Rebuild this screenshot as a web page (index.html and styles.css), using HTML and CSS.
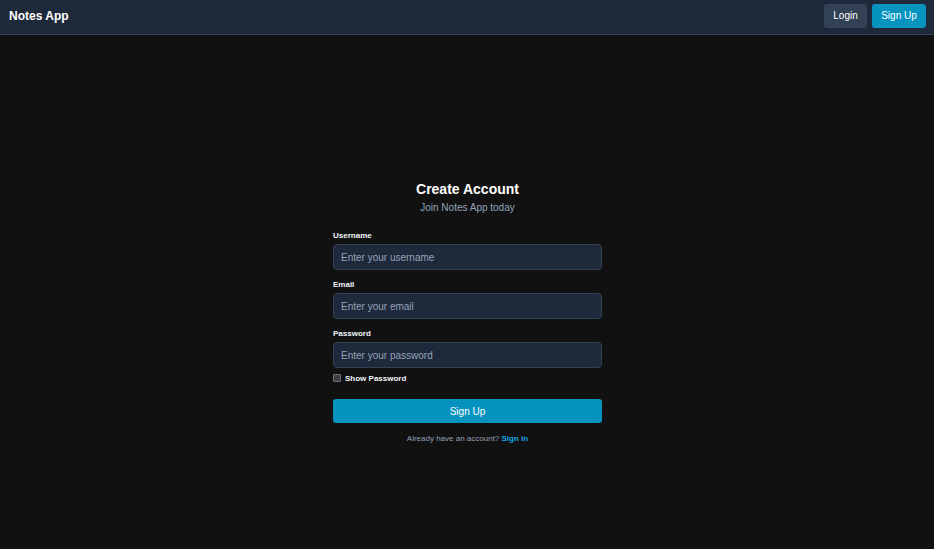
FILE: index.html
```html
<!DOCTYPE html>
<html lang="en">
<head>
<meta charset="utf-8">
<title>Notes App</title>
<link rel="stylesheet" href="styles.css">
</head>
<body>
<header class="navbar">
  <div class="brand">Notes App</div>
  <nav class="nav-actions">
    <button class="btn btn-muted">Login</button>
    <button class="btn btn-primary">Sign Up</button>
  </nav>
</header>
<main class="main">
  <form class="card">
    <h1 class="title">Create Account</h1>
    <p class="subtitle">Join Notes App today</p>
    <div class="field">
      <label class="label">Username</label>
      <input class="input" type="text" placeholder="Enter your username">
    </div>
    <div class="field">
      <label class="label">Email</label>
      <input class="input" type="email" placeholder="Enter your email">
    </div>
    <div class="field field-last">
      <label class="label">Password</label>
      <input class="input" type="password" placeholder="Enter your password">
    </div>
    <label class="check"><span class="box"></span>Show Password</label>
    <button class="submit" type="button">Sign Up</button>
    <p class="footer">Already have an account? <a class="link" href="#">Sign in</a></p>
  </form>
</main>
</body>
</html>
```
FILE: styles.css
```css
* { box-sizing: border-box; }
html, body { margin: 0; padding: 0; }
body {
  background: #111111;
  font-family: "Liberation Sans", Arial, sans-serif;
  color: #f1f5f9;
  height: 549px;
  overflow: hidden;
}
.navbar {
  height: 35px;
  background: #1e293b;
  border-bottom: 1px solid #334155;
  display: flex;
  align-items: center;
  justify-content: space-between;
  padding: 0 8px 0 9px;
}
.brand {
  font-size: 12px;
  font-weight: bold;
  color: #ffffff;
  margin-top: -3px;
}
.nav-actions {
  display: flex;
  gap: 5px;
  margin-top: -3px;
}
.btn {
  border: none;
  border-radius: 3px;
  height: 24px;
  font-family: inherit;
  font-size: 10px;
  color: #ffffff;
  padding: 0;
}
.btn-muted { background: #334155; width: 43px; }
.btn-primary { background: #0693bf; width: 54px; }
.main {
  padding-top: 146px;
}
.card {
  width: 269px;
  margin: 0 0 0 333px;
}
.title {
  margin: 0;
  font-size: 14px;
  line-height: 16px;
  text-align: center;
  color: #ffffff;
  font-weight: bold;
}
.subtitle {
  margin: 5px 0 0;
  font-size: 10px;
  line-height: 12px;
  text-align: center;
  color: #94a3b8;
}
.field {
  display: flex;
  flex-direction: column;
  gap: 3px;
  margin-bottom: 10px;
}
.subtitle + .field { margin-top: 17px; }
.field-last { margin-bottom: 4px; }
.label {
  font-size: 8px;
  line-height: 10px;
  font-weight: bold;
  color: #f1f5f9;
}
.input {
  height: 26px;
  width: 100%;
  background: #1e293b;
  border: 1px solid #334155;
  border-radius: 4px;
  padding: 0 7px;
  font-family: inherit;
  font-size: 10px;
  color: #e2e8f0;
  outline: none;
}
.input::placeholder { color: #94a3b8; }
.check {
  display: flex;
  align-items: center;
  gap: 4px;
  height: 12px;
  font-size: 8px;
  font-weight: bold;
  color: #f1f5f9;
}
.box {
  width: 8px;
  height: 8px;
  background: #3f3f46;
  border: 1px solid #71717a;
  border-radius: 1px;
}
.submit {
  display: block;
  width: 100%;
  height: 24px;
  margin-top: 15px;
  border: none;
  border-radius: 3px;
  background: #0693bf;
  color: #ffffff;
  font-family: inherit;
  font-size: 10px;
}
.footer {
  margin: 10px 0 0;
  font-size: 8px;
  line-height: 12px;
  text-align: center;
  color: #94a3b8;
}
.link {
  color: #0ea5e9;
  font-weight: bold;
  text-decoration: none;
}
```
